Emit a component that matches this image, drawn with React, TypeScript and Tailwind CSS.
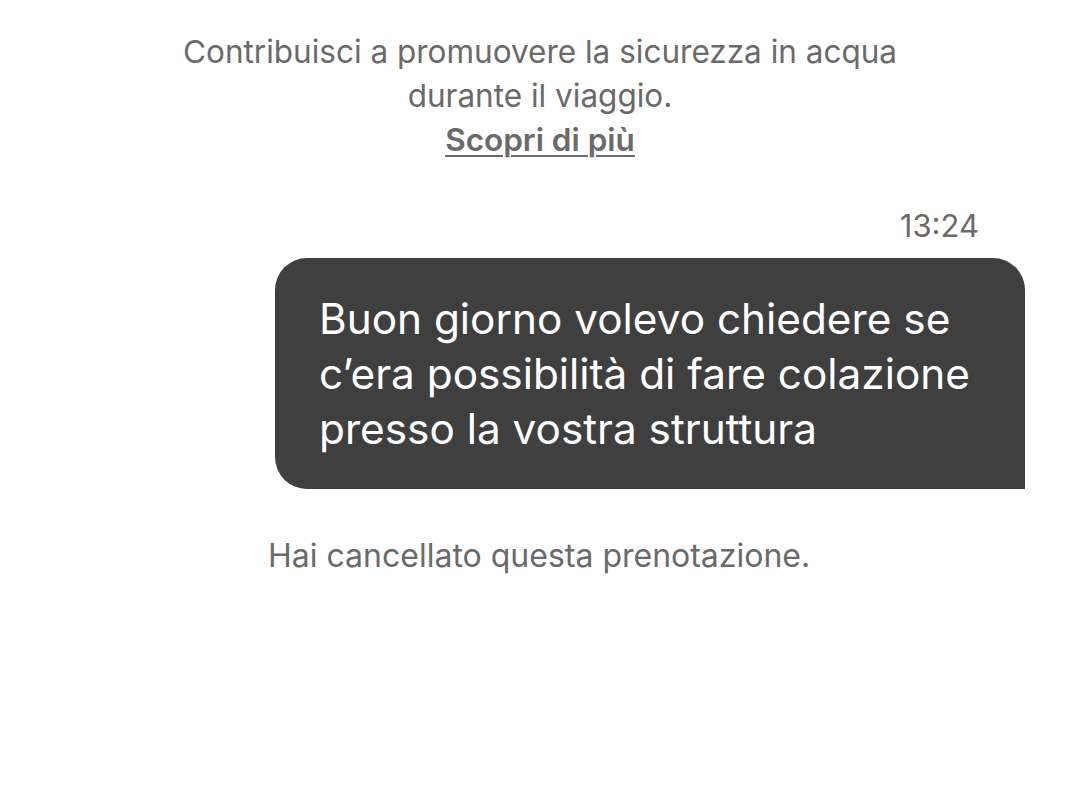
export default function App() {
  return (
    <div className="min-h-[808px] w-[1080px] bg-white font-['Inter',sans-serif] text-[#6a6a6a]">
      <div className="pt-[30px] text-center text-[31.5px] leading-[44px]">
        <p>Contribuisci a promuovere la sicurezza in acqua</p>
        <p>durante il viaggio.</p>
        <a href="#" className="font-semibold underline underline-offset-4 decoration-[1.5px]">Scopri di più</a>
      </div>

      <div className="mt-[44px] pr-[101px] text-right text-[31px] leading-[40px]">13:24</div>

      <div className="ml-[275px] mr-[55px] mt-[12px] rounded-[32px] rounded-br-none bg-[#3f3f3f] pl-[44px] pr-[24px] pt-[33px] pb-[33px] text-[42.3px] leading-[55px] text-white">
        Buon giorno volevo chiedere se c’era possibilità di fare colazione presso la vostra struttura
      </div>

      <p className="mt-[45px] pl-[268px] text-[32px] leading-[44px]">Hai cancellato questa prenotazione.</p>
    </div>
  )
}
